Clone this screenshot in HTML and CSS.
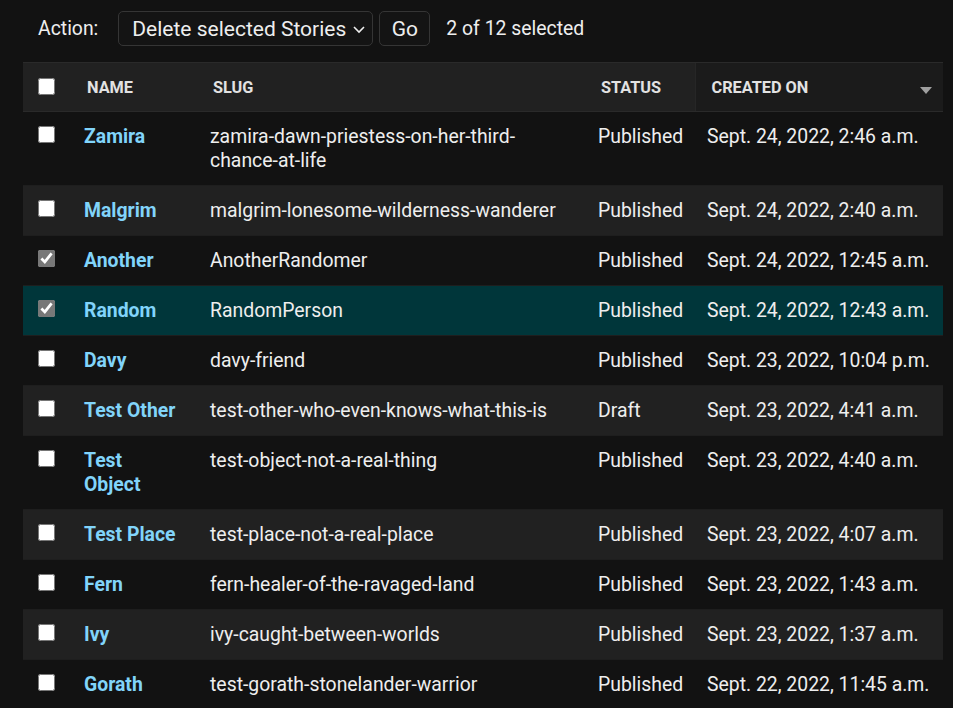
FILE: index.html
```html
<!DOCTYPE html>
<html lang="en">
<head>
<meta charset="utf-8">
<title>Stories</title>
<link rel="stylesheet" href="styles.css">
</head>
<body>
<div class="page">
  <div class="actions">
    <span class="action-label">Action:</span>
    <div class="select">
      <span>Delete selected Stories</span>
      <svg class="chev" width="14" height="9" viewBox="0 0 14 9"><path d="M2 2 L7 7 L12 2" fill="none" stroke="#eee" stroke-width="1.6"/></svg>
    </div>
    <button class="go">Go</button>
    <span class="count">2 of 12 selected</span>
  </div>
  <table class="result">
    <colgroup>
      <col class="c-check"><col class="c-name"><col class="c-slug"><col class="c-status"><col class="c-date">
    </colgroup>
    <thead>
      <tr>
        <th class="check"><input type="checkbox"></th>
        <th>Name</th>
        <th>Slug</th>
        <th>Status</th>
        <th class="sorted"><div class="sorted-inner"><span>Created on</span><span class="sort-arrow"></span></div></th>
      </tr>
    </thead>
    <tbody>
      <tr><td class="check"><input type="checkbox"></td><td class="name"><a href="#">Zamira</a></td><td>zamira-dawn-priestess-on-her-third-chance-at-life</td><td>Published</td><td>Sept. 24, 2022, 2:46 a.m.</td></tr>
      <tr class="alt"><td class="check"><input type="checkbox"></td><td class="name"><a href="#">Malgrim</a></td><td>malgrim-lonesome-wilderness-wanderer</td><td>Published</td><td>Sept. 24, 2022, 2:40 a.m.</td></tr>
      <tr><td class="check"><input type="checkbox" checked></td><td class="name"><a href="#">Another</a></td><td>AnotherRandomer</td><td>Published</td><td>Sept. 24, 2022, 12:45 a.m.</td></tr>
      <tr class="selected"><td class="check"><input type="checkbox" checked></td><td class="name"><a href="#">Random</a></td><td>RandomPerson</td><td>Published</td><td>Sept. 24, 2022, 12:43 a.m.</td></tr>
      <tr><td class="check"><input type="checkbox"></td><td class="name"><a href="#">Davy</a></td><td>davy-friend</td><td>Published</td><td>Sept. 23, 2022, 10:04 p.m.</td></tr>
      <tr class="alt"><td class="check"><input type="checkbox"></td><td class="name"><a href="#">Test Other</a></td><td>test-other-who-even-knows-what-this-is</td><td>Draft</td><td>Sept. 23, 2022, 4:41 a.m.</td></tr>
      <tr><td class="check"><input type="checkbox"></td><td class="name"><a href="#">Test Object</a></td><td>test-object-not-a-real-thing</td><td>Published</td><td>Sept. 23, 2022, 4:40 a.m.</td></tr>
      <tr class="alt"><td class="check"><input type="checkbox"></td><td class="name"><a href="#">Test Place</a></td><td>test-place-not-a-real-place</td><td>Published</td><td>Sept. 23, 2022, 4:07 a.m.</td></tr>
      <tr><td class="check"><input type="checkbox"></td><td class="name"><a href="#">Fern</a></td><td>fern-healer-of-the-ravaged-land</td><td>Published</td><td>Sept. 23, 2022, 1:43 a.m.</td></tr>
      <tr class="alt"><td class="check"><input type="checkbox"></td><td class="name"><a href="#">Ivy</a></td><td>ivy-caught-between-worlds</td><td>Published</td><td>Sept. 23, 2022, 1:37 a.m.</td></tr>
      <tr><td class="check"><input type="checkbox"></td><td class="name"><a href="#">Gorath</a></td><td>test-gorath-stonelander-warrior</td><td>Published</td><td>Sept. 22, 2022, 11:45 a.m.</td></tr>
    </tbody>
  </table>
</div>
</body>
</html>
```
FILE: styles.css
```css
html, body {
  margin: 0;
  padding: 0;
  background: #121212;
}
body {
  font-family: Roboto, "Noto Sans", sans-serif;
  color: #eeeeee;
  font-size: 19.4px;
  overflow: hidden;
}
.page {
  padding: 11px 0 0 23px;
}
.actions {
  display: flex;
  align-items: center;
  height: 35px;
  padding-left: 15px;
  margin-bottom: 16px;
}
.action-label {
  margin-right: 20px;
}
.select {
  box-sizing: border-box;
  width: 255px;
  height: 35px;
  border: 1px solid #353535;
  border-radius: 5px;
  display: flex;
  align-items: center;
  justify-content: space-between;
  padding: 0 6px 0 13px;
  background: #141414;
  font-size: 21px;
}
.chev {
  margin-top: 1px;
}
.go {
  box-sizing: border-box;
  margin-left: 6px;
  width: 51px;
  height: 35px;
  border: 1px solid #353535;
  border-radius: 5px;
  background: #141414;
  color: #eeeeee;
  font: inherit;
  font-size: 21px;
  padding: 0;
}
.count {
  margin-left: 16px;
}
.result {
  border-collapse: collapse;
  table-layout: fixed;
  width: 920px;
}
.c-check { width: 49px; }
.c-name { width: 126px; }
.c-slug { width: 388px; }
.c-status { width: 109px; }
.c-date { width: 248px; }
thead th {
  background: #212121;
  color: #e2e2e2;
  font-size: 16.3px;
  font-weight: 700;
  text-transform: uppercase;
  text-align: left;
  height: 49px;
  box-sizing: border-box;
  padding: 0 0 0 15px;
  border-top: 1px solid #2a2a2a;
  border-bottom: 1px solid #2a2a2a;
  vertical-align: middle;
}
thead th.sorted {
  background: #1b1b1b;
  padding: 0 11px 0 16px;
  border-left: 1px solid #262626;
}
.sorted-inner {
  display: flex;
  align-items: center;
  justify-content: space-between;
}
.sort-arrow {
  width: 0;
  height: 0;
  border-left: 6px solid transparent;
  border-right: 6px solid transparent;
  border-top: 7px solid #a0a0a0;
  margin-top: 6px;
}
th.check {
  padding-left: 15px;
}
tbody td {
  padding: 13px 12px 12px 12px;
  line-height: 24px;
  vertical-align: top;
  border-top: 1px solid #1e1e1e;
  white-space: normal;
}
tbody tr {
  background: #121212;
}
tbody tr.alt {
  background: #212121;
}
tbody tr.selected {
  background: #00363a;
}
td.check {
  padding-left: 15px;
  padding-top: 14px;
}
td.name {
  padding-right: 18px;
}
td.name a {
  color: #81d4fa;
  font-weight: 700;
  text-decoration: none;
}
input[type="checkbox"] {
  width: 17px;
  height: 17px;
  margin: 0;
  accent-color: #787878;
  display: block;
}
thead th.check input {
  margin-top: -2px;
}
```
